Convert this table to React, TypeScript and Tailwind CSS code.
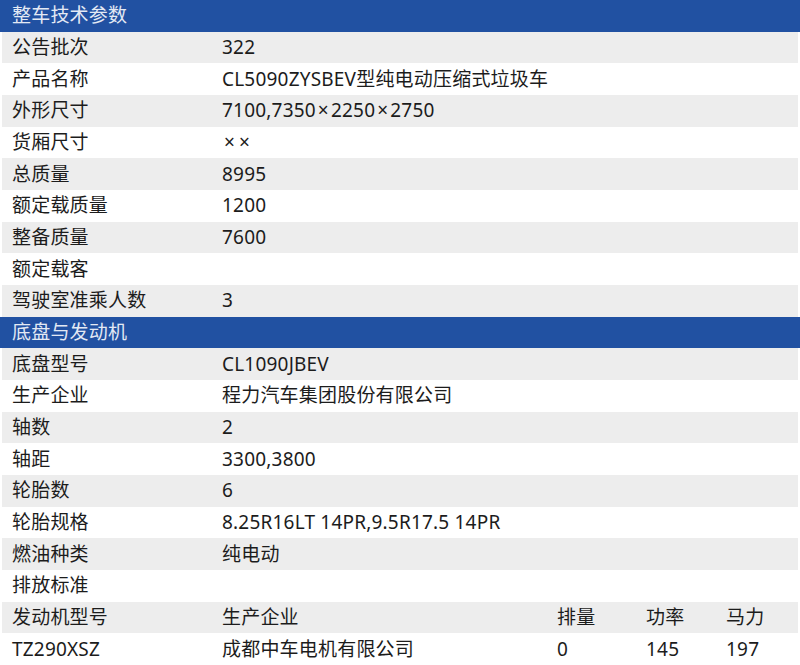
import React from "react";

type Row = [string, string];

const body: Row[] = [
  ["公告批次", "322"],
  ["产品名称", "CL5090ZYSBEV型纯电动压缩式垃圾车"],
  ["外形尺寸", "7100,7350×2250×2750"],
  ["货厢尺寸", "××"],
  ["总质量", "8995"],
  ["额定载质量", "1200"],
  ["整备质量", "7600"],
  ["额定载客", ""],
  ["驾驶室准乘人数", "3"],
];

const chassis: Row[] = [
  ["底盘型号", "CL1090JBEV"],
  ["生产企业", "程力汽车集团股份有限公司"],
  ["轴数", "2"],
  ["轴距", "3300,3800"],
  ["轮胎数", "6"],
  ["轮胎规格", "8.25R16LT 14PR,9.5R17.5 14PR"],
  ["燃油种类", "纯电动"],
  ["排放标准", ""],
];

// the multiplication sign sits a little wider in the original
function Value({ text }: { text: string }) {
  const parts = text.split("×");
  return (
    <div>
      {parts.map((p, i) => (
        <React.Fragment key={i}>
          {i > 0 && <span className="px-[2px]">×</span>}
          {p}
        </React.Fragment>
      ))}
    </div>
  );
}

function Section({ title }: { title: string }) {
  return (
    <div className="flex-1 flex items-center bg-[#2151a2] pl-[12px] text-[#e3e9f4]">
      {title}
    </div>
  );
}

function ParamRow({ row, shaded }: { row: Row; shaded: boolean }) {
  return (
    <div
      className={
        "flex-1 flex items-center mx-[2px] pl-[10px] " +
        (shaded ? "bg-[#ededed]" : "bg-white")
      }
    >
      <div className="w-[210px]">{row[0]}</div>
      <Value text={row[1]} />
    </div>
  );
}

export default function App() {
  return (
    <div
      className="flex flex-col h-[665px] w-[800px] bg-white text-[19px] tracking-[0.2px] text-[#1c1c1c] leading-none"
      style={{ fontFamily: '"Noto Sans", "Noto Sans CJK SC", sans-serif' }}
    >
      <Section title="整车技术参数" />
      {body.map((r, i) => (
        <ParamRow key={r[0]} row={r} shaded={i % 2 === 0} />
      ))}
      <Section title="底盘与发动机" />
      {chassis.map((r, i) => (
        <ParamRow key={r[0]} row={r} shaded={i % 2 === 0} />
      ))}

      {/* engine table */}
      <div className="flex-1 flex items-center mx-[2px] pl-[10px] bg-[#ededed]">
        <div className="w-[210px]">发动机型号</div>
        <div className="w-[335px]">生产企业</div>
        <div className="w-[89px]">排量</div>
        <div className="w-[80px]">功率</div>
        <div>马力</div>
      </div>
      <div className="flex-1 flex items-center mx-[2px] pl-[10px] bg-white">
        <div className="w-[210px]">TZ290XSZ</div>
        <div className="w-[335px]">成都中车电机有限公司</div>
        <div className="w-[89px]">0</div>
        <div className="w-[80px]">145</div>
        <div>197</div>
      </div>
    </div>
  );
}
